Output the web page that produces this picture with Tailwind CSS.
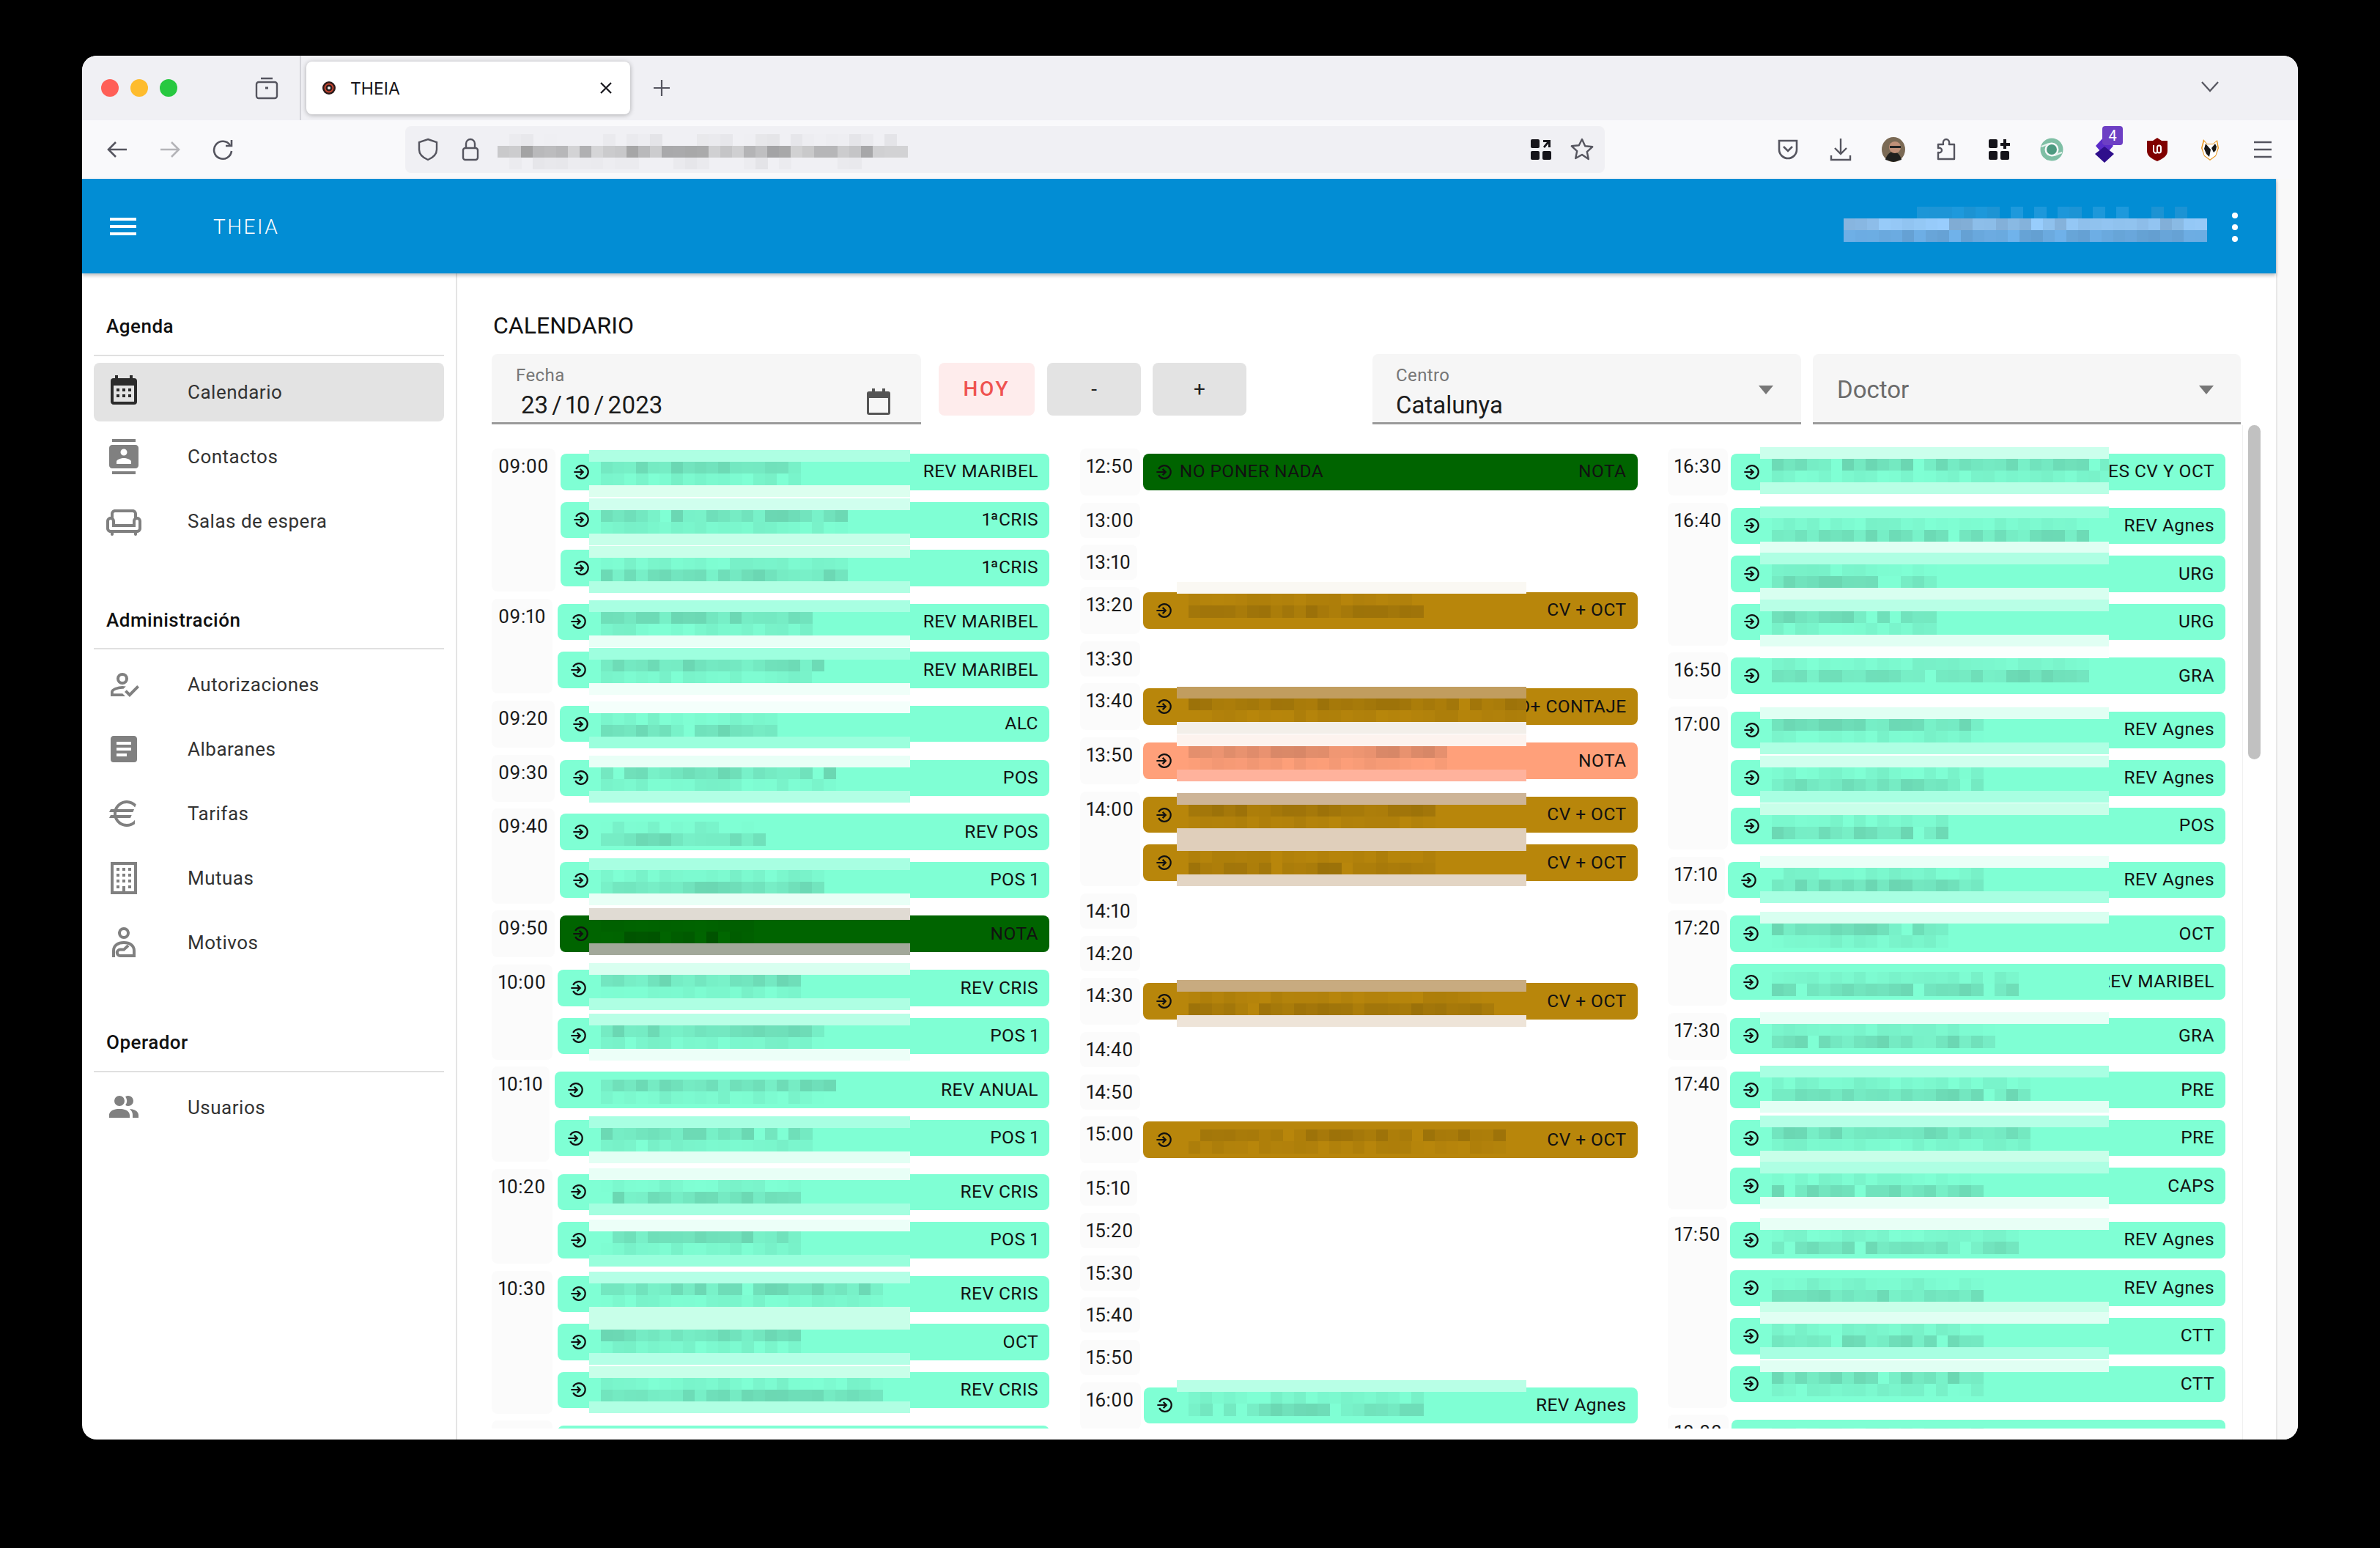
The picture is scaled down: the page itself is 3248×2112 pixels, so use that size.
<!DOCTYPE html>
<html lang="es">
<head>
<meta charset="utf-8">
<title>THEIA</title>
<script src="https://cdn.jsdelivr.net/npm/@tailwindcss/browser@4"></script>
</head>
<body class="bg-black m-0">
<div class="w-[3248px] h-[2112px] bg-black pt-[76px] pl-[112px] overflow-hidden font-['Roboto',sans-serif]">
<div class="w-[3024px] h-[1888px] rounded-[20px] overflow-hidden flex flex-col bg-white">

  <!-- tab strip -->
  <div class="h-[88px] shrink-0 bg-[#f0f0f4] flex items-center relative">
    <div class="flex gap-[16px] ml-[26px]">
      <span class="w-[24px] h-[24px] rounded-full bg-[#ff5f57]"></span>
      <span class="w-[24px] h-[24px] rounded-full bg-[#febc2e]"></span>
      <span class="w-[24px] h-[24px] rounded-full bg-[#28c840]"></span>
    </div>
    <svg class="ml-[106px] w-[32px] h-[32px] text-[#55555f]" viewBox="0 0 32 32" fill="none" stroke="currentColor" stroke-width="2.4"><path d="M8 3h16"/><rect x="2" y="8" width="28" height="22" rx="3"/><path d="M14 16h4" stroke-width="3"/></svg>
    <div class="w-[2px] h-[88px] bg-[#d4d4da] ml-[29px]"></div>
    <div class="ml-[7px] w-[442px] h-[72px] bg-white rounded-[8px] shadow-[0_1px_6px_rgba(0,0,0,0.3)] flex items-center pl-[22px] pr-[24px]">
      <svg class="w-[18px] h-[18px]" viewBox="0 0 18 18"><circle cx="9" cy="9" r="9" fill="#2a1a1a"/><circle cx="9" cy="9" r="5.500" fill="none" stroke="#c8452f" stroke-width="2"/><circle cx="9" cy="9" r="2" fill="#eee"/></svg>
      <span class="ml-[20px] text-[23px] mt-[2px] text-[#15141a] font-['Inter',sans-serif]">THEIA</span>
      <svg class="ml-auto w-[18px] h-[18px] text-[#15141a]" viewBox="0 0 18 18" fill="none" stroke="currentColor" stroke-width="2.2"><path d="M2 2l14 14M16 2L2 16"/></svg>
    </div>
    <svg class="ml-[31px] w-[24px] h-[24px] text-[#55555f]" viewBox="0 0 24 24" fill="none" stroke="currentColor" stroke-width="2.2"><path d="M12 1v22M1 12h22"/></svg>
    <svg class="absolute left-[2892px] top-[34px] w-[24px] h-[16px] text-[#55555f]" viewBox="0 0 24 16" fill="none" stroke="currentColor" stroke-width="2.2"><path d="M1 2l11 12L23 2"/></svg>
  </div>

  <!-- toolbar -->
  <div class="h-[80px] shrink-0 bg-[#f9f9fb] flex items-center">
    <svg class="ml-[33px] w-[30px] h-[30px] text-[#55555f]" viewBox="0 0 30 30" fill="none" stroke="currentColor" stroke-width="2.6"><path d="M28 15H3M13 5L3 15l10 10"/></svg>
    <svg class="ml-[42px] w-[30px] h-[30px] text-[#b4b4b8]" viewBox="0 0 30 30" fill="none" stroke="currentColor" stroke-width="2.6"><path d="M2 15h25M17 5l10 10-10 10"/></svg>
    <svg class="ml-[42px] w-[30px] h-[30px] text-[#55555f]" viewBox="0 0 30 30" fill="none" stroke="currentColor" stroke-width="2.6"><path d="M25 9a12 12 0 1 0 2 8"/><path d="M27 2v8h-8"/></svg>
    <div class="ml-[234px] w-[1637px] h-[64px] rounded-[8px] bg-[#f0f0f4] flex items-center relative">
      <svg class="ml-[17px] w-[28px] h-[32px] text-[#55555f]" viewBox="0 0 28 32" fill="none" stroke="currentColor" stroke-width="2.4"><path d="M14 2l12 4v10c0 7-5 11-12 14C7 27 2 23 2 16V6z"/></svg>
      <svg class="ml-[32px] w-[24px] h-[32px] text-[#55555f]" viewBox="0 0 24 32" fill="none" stroke="currentColor" stroke-width="2.4"><rect x="2" y="14" width="20" height="16" rx="3"/><path d="M6 14V8a6 6 0 0 1 12 0v6"/></svg>
      <div id="url-blur" class="absolute left-[126px] top-[11px]"></div>
      <svg class="absolute left-[1535px] top-[16px] w-[30px] h-[32px]" viewBox="0 0 30 32" fill="#15141a"><rect x="1" y="2" width="12" height="12" rx="2"/><rect x="1" y="18" width="12" height="12" rx="2"/><rect x="17" y="18" width="12" height="12" rx="2"/><path d="M18 3h10v10h-3V8l-5 6-2-2 5-6h-5z"/></svg>
      <svg class="absolute left-[1590px] top-[16px] w-[32px] h-[32px] text-[#55555f]" viewBox="0 0 32 32" fill="none" stroke="currentColor" stroke-width="2.4" stroke-linejoin="round"><path d="M16 2l4.200 9.200 10 1.100-7.400 6.800 2 9.900L16 23l-8.800 5 2-9.900-7.400-6.800 10-1.100z"/></svg>
    </div>
    <div class="ml-[214px] flex items-center">
      <div class="w-[72px] flex justify-center"><svg class="w-[30px] h-[30px] text-[#55555f]" viewBox="0 0 30 30" fill="none" stroke="currentColor" stroke-width="2.6"><path d="M3 3h24v12a12 12 0 0 1-24 0z"/><path d="M9 11l6 6 6-6"/></svg></div>
      <div class="w-[72px] flex justify-center"><svg class="w-[32px] h-[32px] text-[#55555f]" viewBox="0 0 32 32" fill="none" stroke="currentColor" stroke-width="2.4"><path d="M16 1v21M8 14l8 8 8-8M3 24v6h26v-6"/></svg></div>
      <div class="w-[72px] flex justify-center"><svg class="w-[32px] h-[34px]" viewBox="0 0 32 34"><ellipse cx="16" cy="17" rx="16" ry="17" fill="#7b6a55"/><path d="M5 31c2-8 7-11 11-11s9 3 11 11l-11 3z" fill="#20201e"/><circle cx="18" cy="14" r="8" fill="#c09078"/><path d="M11 12h15v3H11z" fill="#222"/></svg></div>
      <div class="w-[72px] flex justify-center"><svg class="w-[32px] h-[32px] text-[#55555f]" viewBox="0 0 32 32" fill="none" stroke="currentColor" stroke-width="2.4" stroke-linejoin="round"><path d="M5 29V20c3 1 5-1 5-3s-2-4-5-3V9h7c-1-4 1-7 4-7s5 3 4 7h7v20z"/></svg></div>
      <div class="w-[72px] flex justify-center"><svg class="w-[30px] h-[32px]" viewBox="0 0 30 32" fill="#15141a"><rect x="1" y="2" width="12" height="12" rx="2"/><rect x="1" y="18" width="12" height="12" rx="2"/><rect x="17" y="18" width="12" height="12" rx="2"/><path d="M21 2h4v5h5v4h-5v4h-4v-4h-4V7h4z"/></svg></div>
      <div class="w-[72px] flex justify-center"><svg class="w-[32px] h-[32px]" viewBox="0 0 32 32" fill="none"><circle cx="16" cy="16" r="12.500" stroke="#7fbfa5" stroke-width="6"/><circle cx="16" cy="16" r="7" fill="#4d9a80"/><path d="M2 12l10-4M30 20l-10 4" stroke="#e8f4ef" stroke-width="2"/></svg></div>
      <div class="w-[72px] h-[36px] flex justify-center relative"><svg class="w-[32px] h-[36px]" viewBox="0 0 32 36"><path d="M16 0l12 13-12 14L4 13z" fill="#5b2cc9"/><path d="M16 14l13 10-13 12L3 24z" fill="#2f0f8c"/></svg><span class="absolute left-[33px] top-[-14px] w-[28px] h-[26px] rounded-[4px] bg-[#6d3fc4] text-white text-[20px] leading-[26px] text-center">4</span></div>
      <div class="w-[72px] flex justify-center"><svg class="w-[30px] h-[32px]" viewBox="0 0 30 32"><path d="M15 0l6 4h8v14c0 7-7 11-14 14C8 29 1 25 1 18V4h8z" fill="#800000"/><path d="M10 10v8a3 3 0 0 0 5 2v-7a2.500 2.500 0 0 1 5 0v5a2.500 2.500 0 0 1-5 0" fill="none" stroke="#fff" stroke-width="2"/></svg></div>
      <div class="w-[72px] flex justify-center"><svg class="w-[32px] h-[32px]" viewBox="0 0 32 32"><path d="M7 2l5 6h8l6-5 2 11-4 11-8 6-8-6-4-11z" fill="#e8961e"/><path d="M8 5l4 4h8l5-4 1.500 9-3 10-7.500 5.500-7.500-5.500-3-10z" fill="#fff"/><path d="M10 8l7 8-2 10-4-4-3-7zM23 8l-5 6 3 6 3-3 1-5z" fill="#181818"/></svg></div>
      <div class="w-[72px] flex justify-center"><svg class="w-[28px] h-[26px] text-[#55555f]" viewBox="0 0 28 26" fill="none" stroke="currentColor" stroke-width="2.6"><path d="M2 3h24M2 13h24M2 23h24"/></svg></div>
    </div>
  </div>

  <div class="flex-1 flex min-h-0">
    <div class="w-[2994px] flex flex-col min-h-0">
      <!-- app bar -->
      <header class="h-[129px] shrink-0 bg-[#028dd4] flex items-center relative z-10 shadow-[0_3px_5px_rgba(0,0,0,0.25)] text-white">
        <svg class="ml-[38px] w-[36px] h-[24px]" viewBox="0 0 36 24" fill="#fff"><rect width="36" height="4"/><rect y="10" width="36" height="4"/><rect y="20" width="36" height="4"/></svg>
        <span class="ml-[105px] mt-[3px] text-[28px] tracking-[2.5px] font-light">THEIA</span>
        <div id="head-blur" class="absolute left-[2404px] top-[38px]"></div>
        <div class="absolute left-[2934px] top-[46px] flex flex-col gap-[8px]">
          <span class="w-[8px] h-[8px] rounded-full bg-white"></span>
          <span class="w-[8px] h-[8px] rounded-full bg-white"></span>
          <span class="w-[8px] h-[8px] rounded-full bg-white"></span>
        </div>
      </header>

      <div class="flex-1 flex min-h-0">
        <!-- sidebar -->
        <aside id="sidebar" class="w-[512px] shrink-0 border-r-2 border-[#e4e4e4] text-[26px] tracking-[0.5px]">
          <h2 class="pl-[33px] pt-[52px] pb-[19px] leading-[40px] font-medium text-[#111]">Agenda</h2>
          <div class="mx-[16px] h-[2px] bg-[#e0e0e0]"></div>
          <nav class="mt-[9px] flex flex-col gap-[8px]">
            <a class="mx-[16px] h-[80px] rounded-[8px] bg-[#e3e3e3] flex items-center pl-[17px] text-[#333]">
              <svg class="w-[48px] h-[48px] -mt-[2px]" viewBox="0 0 24 24" fill="#2b2b2b"><path d="M9,10V12H7V10H9M13,10V12H11V10H13M17,10V12H15V10H17M19,3A2,2 0 0,1 21,5V19A2,2 0 0,1 19,21H5C3.89,21 3,20.1 3,19V5A2,2 0 0,1 5,3H6V1H8V3H16V1H18V3H19M19,19V8H5V19H19M9,14V16H7V14H9M13,14V16H11V14H13M17,14V16H15V14H17Z"/></svg>
              <span class="ml-[63px] mt-[1px]">Calendario</span>
            </a>
            <a class="mx-[16px] h-[80px] flex items-center pl-[17px] text-[#333]">
              <svg class="w-[48px] h-[48px]" viewBox="0 0 24 24" fill="#808080"><path d="M20,0H4V2H20V0M4,24H20V22H4V24M20,4H4C2.9,4 2,4.9 2,6V18C2,19.1 2.9,20 4,20H20C21.1,20 22,19.1 22,18V6C22,4.9 21.1,4 20,4M12,6.75C13.24,6.75 14.25,7.76 14.25,9C14.25,10.24 13.24,11.25 12,11.25C10.76,11.25 9.75,10.24 9.75,9C9.75,7.76 10.76,6.75 12,6.75M17,17H7V15.5C7,13.83 10.33,13 12,13C13.67,13 17,13.83 17,15.5V17Z"/></svg>
              <span class="ml-[63px] mt-[1px]">Contactos</span>
            </a>
            <a class="mx-[16px] h-[80px] flex items-center pl-[17px] text-[#333]">
              <svg class="w-[48px] h-[48px]" viewBox="0 0 24 24" fill="#808080"><path d="M21 9V7c0-1.65-1.35-3-3-3H6C4.35 4 3 5.35 3 7v2c-1.65 0-3 1.35-3 3v5c0 1.65 1.35 3 3 3v1c0 .55.45 1 1 1s1-.45 1-1v-1h14v1c0 .55.45 1 1 1s1-.45 1-1v-1c1.65 0 3-1.35 3-3v-5c0-1.65-1.35-3-3-3zM5 7c0-.55.45-1 1-1h12c.55 0 1 .45 1 1v2.78c-.61.55-1 1.34-1 2.22v2H6v-2c0-.88-.39-1.67-1-2.22V7zm17 10c0 .55-.45 1-1 1H3c-.55 0-1-.45-1-1v-5c0-.55.45-1 1-1s1 .45 1 1v4h16v-4c0-.55.45-1 1-1s1 .45 1 1v5z"/></svg>
              <span class="ml-[63px] mt-[1px]">Salas de espera</span>
            </a>
          </nav>
          <h2 class="pl-[33px] pt-[75px] pb-[18px] leading-[40px] font-medium text-[#111]">Administración</h2>
          <div class="mx-[16px] h-[2px] bg-[#e0e0e0]"></div>
          <nav class="mt-[8px] flex flex-col gap-[8px]">
            <a class="mx-[16px] h-[80px] flex items-center pl-[17px] text-[#333]">
              <svg class="w-[48px] h-[48px]" viewBox="0 0 24 24" fill="#808080"><path d="M21.1,12.5L22.5,13.91L15.97,20.5L12.5,17L13.9,15.59L15.97,17.67L21.1,12.5M11,4A4,4 0 0,1 15,8A4,4 0 0,1 11,12A4,4 0 0,1 7,8A4,4 0 0,1 11,4M11,6A2,2 0 0,0 9,8A2,2 0 0,0 11,10A2,2 0 0,0 13,8A2,2 0 0,0 11,6M11,13C11.68,13 12.5,13.09 13.41,13.26L11.74,14.93L11,14.9C8.03,14.9 4.9,16.36 4.9,17V18.1H11.1L13,20H3V17C3,14.34 8.33,13 11,13Z"/></svg>
              <span class="ml-[63px] mt-[1px]">Autorizaciones</span>
            </a>
            <a class="mx-[16px] h-[80px] flex items-center pl-[17px] text-[#333]">
              <svg class="w-[48px] h-[48px]" viewBox="0 0 24 24" fill="#808080"><path d="M14,17H7V15H14M17,13H7V11H17M17,9H7V7H17M19,3H5C3.89,3 3,3.89 3,5V19A2,2 0 0,0 5,21H19A2,2 0 0,0 21,19V5C21,3.89 20.1,3 19,3Z"/></svg>
              <span class="ml-[63px] mt-[1px]">Albaranes</span>
            </a>
            <a class="mx-[16px] h-[80px] flex items-center pl-[17px] text-[#333]">
              <svg class="w-[48px] h-[48px]" viewBox="0 0 24 24" fill="#808080"><path d="M7.07,11L7,12L7.07,13H17.35L16.5,15H7.67C8.8,17.36 11.21,19 14,19C16.23,19 18.22,17.96 19.5,16.33V19.12C18,20.3 16.07,21 14,21C10.08,21 6.75,18.5 5.5,15H2L3,13H5.05L5,12L5.05,11H2L3,9H5.5C6.75,5.5 10.08,3 14,3C16.5,3 18.8,4.04 20.43,5.71L19.57,7.75C18.29,6.08 16.27,5 14,5C11.21,5 8.8,6.64 7.67,9H19.04L18.19,11H7.07Z"/></svg>
              <span class="ml-[63px] mt-[1px]">Tarifas</span>
            </a>
            <a class="mx-[16px] h-[80px] flex items-center pl-[17px] text-[#333]">
              <svg class="w-[48px] h-[48px]" viewBox="0 0 24 24" fill="#808080" fill-rule="evenodd"><path d="M21 1H3V23H21V1ZM19 3V21H13V17.5H11V21H5V3H19ZM15 7H17V5H15V7ZM11 7H13V5H11V7ZM7 7H9V5H7V7ZM15 11H17V9H15V11ZM11 11H13V9H11V11ZM7 11H9V9H7V11ZM15 15H17V13H15V15ZM11 15H13V13H11V15ZM7 15H9V13H7V15ZM15 19H17V17H15V19ZM7 19H9V17H7V19Z"/></svg>
              <span class="ml-[63px] mt-[1px]">Mutuas</span>
            </a>
            <a class="mx-[16px] h-[80px] flex items-center pl-[17px] text-[#333]">
              <svg class="w-[48px] h-[48px]" viewBox="0 0 24 24" fill="none" stroke="#808080" stroke-width="2"><circle cx="12" cy="5.500" r="3"/><path d="M5 22v-4.500C5 14 8 12 12 12s7 2 7 5.500V21H9.500a2 2 0 0 1 0-4.200h2.500L15 14"/></svg>
              <span class="ml-[63px] mt-[1px]">Motivos</span>
            </a>
          </nav>
          <h2 class="pl-[33px] pt-[76px] pb-[19px] leading-[40px] font-medium text-[#111]">Operador</h2>
          <div class="mx-[16px] h-[2px] bg-[#e0e0e0]"></div>
          <nav class="mt-[8px] flex flex-col gap-[8px]">
            <a class="mx-[16px] h-[80px] flex items-center pl-[17px] text-[#333]">
              <svg class="w-[48px] h-[48px]" viewBox="0 0 24 24" fill="#808080"><path d="M16 17V19H2V17S2 13 9 13 16 17 16 17M12.5 7.5A3.5 3.5 0 1 0 9 11A3.5 3.5 0 0 0 12.5 7.5M15.94 13A5.32 5.32 0 0 1 18 17V19H22V17S22 13.37 15.94 13M15 4A3.39 3.39 0 0 0 13.07 4.59A5 5 0 0 1 13.07 10.41A3.39 3.39 0 0 0 15 11A3.5 3.5 0 0 0 15 4Z"/></svg>
              <span class="ml-[63px] mt-[1px]">Usuarios</span>
            </a>
          </nav>
        </aside>

        <!-- main -->
        <main class="flex-1 min-w-0 pl-[47px] relative">
          <h1 class="pt-[50px] pl-[2px] leading-[42px] text-[32px] text-[#111]">CALENDARIO</h1>
          <div class="mt-[18px] h-[96px] flex items-center">
            <div class="w-[586px] h-[96px] rounded-t-[8px] bg-[#f6f6f6] border-b-[3px] border-[#9a9a9a] relative">
              <span class="absolute left-[33px] top-[15px] text-[24px] leading-[28px] tracking-[0.4px] text-[#777]">Fecha</span>
              <span class="absolute left-[40px] top-[50px] text-[33px] leading-[40px] text-[#1c1c1c] [word-spacing:-3px] proportional-nums">23 / 10 / 2023</span>
              <svg class="absolute left-[510px] top-[46px] w-[36px] h-[38px]" viewBox="0 0 36 38" fill="#555"><path d="M9 1h4v4h10V1h4v4h4a3 3 0 0 1 3 3v26a3 3 0 0 1-3 3H5a3 3 0 0 1-3-3V8a3 3 0 0 1 3-3h4zM5 14v20h26V14z"/></svg>
            </div>
            <button class="ml-[24px] w-[131px] h-[72px] rounded-[8px] bg-[#feecec] text-[#ef5350] text-[28px] tracking-[2.8px] font-medium">HOY</button>
            <button class="ml-[17px] w-[128px] h-[72px] rounded-[8px] bg-[#e3e3e3] text-[#222] text-[28px]">-</button>
            <button class="ml-[16px] w-[128px] h-[72px] rounded-[8px] bg-[#e3e3e3] text-[#222] text-[28px]">+</button>
            <div class="ml-[172px] w-[585px] h-[96px] rounded-t-[8px] bg-[#f6f6f6] border-b-[3px] border-[#9a9a9a] relative">
              <span class="absolute left-[32px] top-[15px] text-[24px] leading-[28px] tracking-[0.4px] text-[#777]">Centro</span>
              <span class="absolute left-[32px] top-[50px] text-[33px] leading-[40px] text-[#1c1c1c]">Catalunya</span>
              <svg class="absolute left-[527px] top-[43px] w-[20px] h-[12px]" viewBox="0 0 20 12" fill="#777"><path d="M0 0h20L10 12z"/></svg>
            </div>
            <div class="ml-[16px] w-[584px] h-[96px] rounded-t-[8px] bg-[#f6f6f6] border-b-[3px] border-[#9a9a9a] relative">
              <span class="absolute left-[33px] top-[29px] text-[33px] leading-[40px] text-[#6b6b6b]">Doctor</span>
              <svg class="absolute left-[527px] top-[43px] w-[20px] h-[12px]" viewBox="0 0 20 12" fill="#777"><path d="M0 0h20L10 12z"/></svg>
            </div>
          </div>
          <div class="h-[1370px] pt-[33px] overflow-hidden">
            <div id="cols" class="grid grid-cols-3 w-[2366px] gap-x-[41.5px] items-start"></div>
          </div>
          <div class="absolute left-[2436px] top-[207px] bottom-0 w-[30px] border-l border-[#f0f0f0] bg-white">
            <div class="ml-[7px] w-[17px] h-[456px] rounded-full bg-[#c1c1c1]"></div>
          </div>
        </main>
      </div>
    </div>
    <div class="w-[30px] bg-[#f9f9f9] border-l-2 border-[#e8e8e8]"></div>
  </div>
</div>
</div>

<script>
let seed = 7;
function rnd(){ seed = (seed * 16807) % 2147483647; return (seed & 65535) / 65535; }
function hex(c){ return '#' + c.map(v => Math.max(0, Math.min(255, Math.round(v))).toString(16).padStart(2,'0')).join(''); }
function rgb(h){ return [1,3,5].map(i => parseInt(h.substr(i,2),16)); }
function shade(h, f){ return hex(rgb(h).map(v => v * f)); }

function svgBands(w, bands, bh){
  let out = '';
  bands.forEach((b, i) => {
    if (b.bg) out += '<rect x="0" y="' + (i*bh) + '" width="' + w + '" height="' + (bh+0.5) + '" fill="' + b.bg + '"/>';
    if (b.cells) {
      for (let x = b.from; x < b.to; x += 16) {
        const r = rnd();
        if (r < b.skip) continue;
        const f = b.lo + (b.hi - b.lo) * rnd();
        out += '<rect x="' + x + '" y="' + (i*bh) + '" width="16.5" height="' + (bh+0.5) + '" fill="' + shade(b.cells, f) + '"/>';
      }
    }
  });
  return '<svg class="block" width="' + w + '" height="' + (bands.length*bh) + '" shape-rendering="crispEdges">' + out + '</svg>';
}

/* chrome blurs */
document.getElementById('url-blur').innerHTML = svgBands(560, [
  {bg:'#f0f0f4', cells:'#f0f0f4', from:16, to:540, skip:.3, lo:.95, hi:1},
  {bg:'#d8d8da', cells:'#d6d6d8', from:0, to:560, skip:0, lo:.76, hi:1},
  {bg:'#f0f0f4', cells:'#f0f0f4', from:16, to:540, skip:.4, lo:.95, hi:1}
], 16);
document.getElementById('head-blur').innerHTML = svgBands(496, [
  {bg:'#028dd4', cells:'#1d96d8', from:100, to:480, skip:.5, lo:.97, hi:1.02},
  {bg:'#8bbbe6', cells:'#8bbbe6', from:0, to:496, skip:0, lo:.92, hi:1.1},
  {bg:'#6aa9de', cells:'#6aa9de', from:0, to:496, skip:0, lo:.94, hi:1.06}
], 16);

const T='#7fffd4', G='#b8860b', S='#ffa07a', D='#006400';
const patchLeft = [133, 132, 126];
const patchWidth = [438, 477, 476];

/* row: [label, colour, text end, top band, bottom band, top offset, extra-left text] */
const data = [
 [
  ['09:00',[['REV MARIBEL',T,288,'#aeffe3','#dcffef',-5],['1ªCRIS',T,351,'#d0ffee','#c6ffe9',-5],['1ªCRIS',T,351,'#c8ffe9','#b0ffe3',-5]]],
  ['09:10',[['REV MARIBEL',T,304,'#a8ffe2','#e8fff6',-5],['REV MARIBEL',T,319,'#9effdf','#f0fff9',-5]]],
  ['09:20',[['ALC',T,256,'#f4fffb','#9bffdd',-6]]],
  ['09:30',[['POS',T,321,'#e8fff6','#b2ffe5',-6]]],
  ['09:40',[['REV POS',T,238,T,T,-5],['POS 1',T,314,'#a8ffe2','#e8fff6',-5]]],
  ['09:50',[['NOTA',D,211,'#e0dbd3','#a2a89a',-10]]],
  ['10:00',[['REV CRIS',T,288,'#d8fff0','#aeffe3',-9],['POS 1',T,314,'#b8ffe6','#ecfff8',-6]]],
  ['10:10',[['REV ANUAL',T,335,T,T,-5],['POS 1',T,304,'#a8ffe2','#e2fff4',-5]]],
  ['10:20',[['REV CRIS',T,273,'#e8fff6','#a4ffe0',-8],['POS 1',T,273,'#ecfff8','#98ffdc',-3]]],
  ['10:30',[['REV CRIS',T,400,'#b4ffe6','#c8ffe9',-6],['OCT',T,273,'#c8ffe9','#b4ffe6',-8],['REV CRIS',T,400,'#c8ffe9','#b0ffe3',-8]]],
  ['10:40',[['REV CRIS',T,300,T,T,-5]]]
 ],
 [
  ['12:50',[['NOTA',D,0,null,null,0,'NO PONER NADA']]],
  ['13:00',[]],
  ['13:10',[]],
  ['13:20',[['CV + OCT',G,336,'#faf8f3',G,-14]]],
  ['13:30',[]],
  ['13:40',[['O+ CONTAJE',G,477,'#c19d5f','#f3efe9',-2]]],
  ['13:50',[['NOTA',S,368,'#fdf3ee','#ffb29c',-11]]],
  ['14:00',[['CV + OCT',G,352,'#cdb497','#e0cfbb',-5],['CV + OCT',G,352,'#e0cfbb','#e3d5c4',-7]]],
  ['14:10',[]],
  ['14:20',[]],
  ['14:30',[['CV + OCT',G,430,'#c8ab80','#eee4d8',-4]]],
  ['14:40',[]],
  ['14:50',[]],
  ['15:00',[['CV + OCT',G,440,G,G,-5]]],
  ['15:10',[]],
  ['15:20',[]],
  ['15:30',[]],
  ['15:40',[]],
  ['15:50',[]],
  ['16:00',[['REV Agnes',T,332,'#b8ffe6',T,-10]]],
  ['16:10',[]]
 ],
 [
  ['16:30',[['ES CV Y OCT',T,476,'#cbffec','#b8ffe5',-9]]],
  ['16:40',[['REV Agnes',T,448,'#98ffdc','#e0fff3',-2],['URG',T,240,'#aeffe3','#d8fff0',-4],['URG',T,240,'#b8ffe6','#e0fff3',-6]]],
  ['16:50',[['GRA',T,448,'#fafffd',T,-15]]],
  ['17:00',[['REV Agnes',T,290,'#e0fff3','#aeffe3',-6],['REV Agnes',T,290,'#d0ffee','#a8ffe2',-6],['POS',T,248,'#c8ffe9',T,-6]]],
  ['17:10',[['REV Agnes',T,290,'#eafff7','#a8ffe2',-8]]],
  ['17:20',[['OCT',T,242,'#d8fff0',T,-5],['REV MARIBEL',T,352,T,T,-5]]],
  ['17:30',[['GRA',T,310,'#e8fff6',T,-8]]],
  ['17:40',[['PRE',T,368,'#a8ffe2','#e2fff4',-8],['PRE',T,368,'#b4ffe6','#c8ffe9',-6],['CAPS',T,290,'#aeffe3','#e8fff6',-8]]],
  ['17:50',[['REV Agnes',T,352,'#e8fff6',T,-5],['REV Agnes',T,290,T,'#c8ffe9',-5],['CTT',T,290,'#e0fff3','#a8ffe2',-8],['CTT',T,290,'#e0fff3',T,-8]]],
  ['18:00',[['CTT',T,290,T,T,-5]]]
 ]
];

const loginIcon = '<svg class="w-[22px] h-[22px] shrink-0 text-[#111]" viewBox="0 0 24 24" fill="none" stroke="currentColor" stroke-width="2.4"><path d="M4.500 7.500a9.600 9.600 0 1 1 0 9"/><path d="M1.500 12H15M10.500 7.500L15 12l-4.500 4.500"/></svg>';

function patch(col, r, idx){
  const base = r[1], end = r[2];
  if (!end) return '';
  const strong = base===D ? {lo:.8,hi:1.05} : {lo:.84,hi:.95};
  const faint = {lo:.94,hi:1};
  const flip = rnd() < .3;
  const a = flip ? strong : faint, b = flip ? faint : strong;
  const bands = [
    {bg:r[3]===base ? null : r[3]},
    {bg:base, cells:base, from:16, to:end, skip:.06, lo:a.lo, hi:a.hi},
    {bg:base, cells:base, from:16, to:end, skip:.06, lo:b.lo, hi:b.hi},
    {bg:r[4]===base ? null : r[4]}
  ];
  const top = 7 + idx * 65.5 + r[5];
  return '<div class="absolute pointer-events-none" style="left:' + patchLeft[col] + 'px;top:' + top + 'px">' + svgBands(patchWidth[col], bands, 16) + '</div>';
}

const colours = {
  '#7fffd4':'bg-[#7fffd4]',
  '#b8860b':'bg-[#b8860b]',
  '#ffa07a':'bg-[#ffa07a]',
  '#006400':'bg-[#006400]'
};
const groupGap = ['gap-[7px]', 'gap-[4px]', 'gap-[4px]'];

document.getElementById('cols').innerHTML = data.map((col, c) =>
  '<div class="flex flex-col gap-[9.7px] text-[26px] tracking-[0.46px] proportional-nums text-[#1a1a1a]">' + col.map(g =>
    '<div class="relative flex ' + groupGap[c] + '">' +
      '<div class="shrink-0 rounded-[8px] bg-[#fbfbfb] px-[9px] leading-[48px]">' + g[0] + '</div>' +
      '<div class="flex-1 min-w-0 min-h-[48px] flex flex-col gap-[16px] pt-[7px] pb-[7.5px]">' +
        g[1].map(r =>
          '<div class="h-[49.5px] rounded-[8px] ' + colours[r[1]] + ' flex items-center pl-[17px] pr-[15px] whitespace-nowrap overflow-hidden text-[24.5px] tracking-[0.44px] text-[#111]">' +
            loginIcon +
            (r[6] ? '<span class="ml-[11px]">' + r[6] + '</span>' : '') +
            '<span class="ml-auto">' + r[0] + '</span>' +
          '</div>').join('') +
      '</div>' +
      g[1].map((r, i) => patch(c, r, i)).join('') +
    '</div>').join('') +
  '</div>').join('');
</script>
</body>
</html>
